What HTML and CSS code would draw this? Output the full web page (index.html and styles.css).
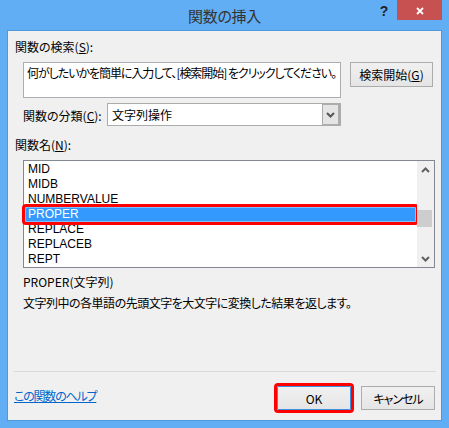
FILE: index.html
```html
<!DOCTYPE html>
<html lang="ja">
<head>
<meta charset="utf-8">
<title>関数の挿入</title>
<link rel="stylesheet" href="styles.css">
</head>
<body>
<div class="window">
  <div class="titlebar">
    <div class="tb-side"></div>
    <div class="title">関数の挿入</div>
    <div class="tb-side tb-right">
      <span class="help-btn">?</span>
      <span class="close-btn"><svg width="8" height="8" viewBox="0 0 8 8"><path d="M1 1L7 7M7 1L1 7" stroke="#fff" stroke-width="1.8" fill="none"/></svg></span>
    </div>
  </div>
  <div class="client">
    <div class="label top-label">関数の検索(<u>S</u>):</div>
    <div class="search-row">
      <div class="search-box">何がしたいかを簡単に入力して、[検索開始] をクリックしてください。</div>
      <div class="btn search-btn">検索開始(<u>G</u>)</div>
    </div>
    <div class="cat-row">
      <div class="label cat-label">関数の分類(<u>C</u>):</div>
      <div class="combo">
        <div class="combo-text">文字列操作</div>
        <div class="combo-btn"><svg width="9" height="6" viewBox="0 0 9 6"><path d="M1 1L4.5 4.5L8 1" stroke="#555" stroke-width="2" fill="none"/></svg></div>
      </div>
    </div>
    <div class="label name-label">関数名(<u>N</u>):</div>
    <div class="listbox">
      <div class="items">
        <div class="item">MID</div>
        <div class="item">MIDB</div>
        <div class="item">NUMBERVALUE</div>
        <div class="item selected">PROPER</div>
        <div class="item">REPLACE</div>
        <div class="item">REPLACEB</div>
        <div class="item">REPT</div>
      </div>
      <div class="scrollbar">
        <div class="sb-arrow"><svg width="9" height="6" viewBox="0 0 9 6"><path d="M1 5L4.5 1.5L8 5" stroke="#606060" stroke-width="2" fill="none"/></svg></div>
        <div class="sb-track"><div class="sb-thumb"></div></div>
        <div class="sb-arrow"><svg width="9" height="6" viewBox="0 0 9 6"><path d="M1 1L4.5 4.5L8 1" stroke="#606060" stroke-width="2" fill="none"/></svg></div>
      </div>
    </div>
    <div class="desc">
      <div class="desc-line">PROPER(文字列)</div>
      <div class="desc-line desc-main">文字列中の各単語の先頭文字を大文字に変換した結果を返します。</div>
    </div>
    <div class="spacer"></div>
    <div class="separator"></div>
    <div class="footer">
      <a class="help-link" href="#">この関数のヘルプ</a>
      <div class="buttons">
        <div class="btn ok-btn">OK</div>
        <div class="btn cancel-btn">キャンセル</div>
      </div>
    </div>
  </div>
</div>
</body>
</html>
```
FILE: styles.css
```css
html, body {
  margin: 0;
  padding: 0;
}
body {
  width: 449px;
  height: 428px;
  overflow: hidden;
  font-family: "Noto Sans CJK JP", sans-serif;
  font-size: 12px;
  font-feature-settings: "palt";
  color: #000;
}
.window {
  box-sizing: border-box;
  width: 449px;
  height: 428px;
  background: #61aef5;
  padding: 0 7px 7px 7px;
  display: flex;
  flex-direction: column;
}
.titlebar {
  height: 30px;
  flex: none;
  display: grid;
  grid-template-columns: 1fr auto 1fr;
}
.title {
  font-size: 15px;
  line-height: 20px;
  padding-top: 6px;
  color: #333;
  letter-spacing: -0.3px;
}
.tb-right {
  display: flex;
  justify-content: flex-end;
  align-items: flex-start;
}
.help-btn {
  width: 26px;
  height: 20px;
  text-align: center;
  font-family: "Liberation Sans", sans-serif;
  font-weight: bold;
  font-size: 14px;
  line-height: 22px;
  color: #222;
}
.close-btn {
  width: 45px;
  height: 20px;
  background: #c75050;
  display: flex;
  align-items: center;
  justify-content: center;
}
.close-btn svg {
  display: block;
  margin-top: 1px;
}
.client {
  flex: 1;
  background: #f0f0f0;
  border: 1px solid #4e98dc;
  display: flex;
  flex-direction: column;
  min-height: 0;
}
.label {
  line-height: 16px;
  white-space: nowrap;
}
.top-label {
  margin: 8px 0 0 7px;
}
.search-row {
  display: flex;
  margin: 7px 0 0 15px;
  align-items: flex-start;
}
.search-box {
  box-sizing: border-box;
  width: 318px;
  height: 36px;
  background: #fff;
  border: 1px solid #abadb3;
  padding: 2px 0 0 3px;
  line-height: 16px;
  white-space: nowrap;
  overflow: hidden;
  letter-spacing: -1.05px;
}
.btn {
  box-sizing: border-box;
  border: 1px solid #acacac;
  background: linear-gradient(#f0f0f0, #e5e5e5);
  display: flex;
  align-items: center;
  justify-content: center;
  white-space: nowrap;
}
.search-btn {
  width: 83px;
  height: 25px;
  margin-left: 9px;
  line-height: 16px;
}
.cat-row {
  display: flex;
  align-items: center;
  margin: 5px 0 0 15px;
}
.cat-label {
  width: 84px;
  padding-top: 3px;
}
.combo {
  box-sizing: border-box;
  width: 234px;
  height: 23px;
  border: 1px solid #acacac;
  background: #fff;
  display: flex;
}
.combo-text {
  flex: 1;
  padding-left: 4px;
  line-height: 21px;
}
.combo-btn {
  box-sizing: border-box;
  width: 18px;
  height: 21px;
  background: #e5e5e5;
  border: 1px solid #acacac;
  border-right-width: 2px;
  display: flex;
  align-items: center;
  justify-content: center;
}
.combo-btn svg, .sb-arrow svg {
  display: block;
}
.name-label {
  margin: 11px 0 0 7px;
}
.listbox {
  box-sizing: border-box;
  width: 412px;
  height: 108px;
  margin: 7px 0 0 15px;
  border: 1px solid #828790;
  background: #fff;
  display: flex;
}
.items {
  flex: 1;
  padding-top: 1px;
}
.item {
  height: 15px;
  line-height: 15px;
  padding-left: 3px;
  margin: 0 1px;
  white-space: nowrap;
  font-family: "Liberation Sans", sans-serif;
  font-size: 12px;
}
.item.selected {
  background: #3399ff;
  color: #fff;
  outline: 3px solid #ff0000;
  border-radius: 1px;
  box-shadow: inset 0 0 0 1px #7fbfff;
}
.scrollbar {
  width: 17px;
  background: #f0f0f0;
  display: flex;
  flex-direction: column;
}
.sb-arrow {
  height: 17px;
  display: flex;
  align-items: center;
  justify-content: center;
}
.sb-track {
  flex: 1;
}
.sb-thumb {
  width: 15px;
  height: 17px;
  margin: 32px 0 0 0;
  background: #cdcdcd;
}
.desc {
  margin: 3px 0 0 15px;
}
.desc-line {
  line-height: 21px;
  white-space: nowrap;
}
.desc-main {
  letter-spacing: -0.5px;
}
.spacer {
  flex: 1;
}
.separator {
  height: 1px;
  background: #dadada;
  margin: 0 5px 0 6px;
}
.footer {
  display: flex;
  align-items: center;
  justify-content: space-between;
  margin: 14px 6px 10px 6px;
}
.help-link {
  color: #0066cc;
  text-decoration: underline;
  line-height: 16px;
  margin-top: -4px;
  letter-spacing: -1.2px;
}
.buttons {
  display: flex;
  gap: 10px;
}
.ok-btn, .cancel-btn {
  width: 74px;
  height: 24px;
}
.cancel-btn {
  letter-spacing: -1px;
}
.ok-btn {
  border-color: #3c8fe0;
  outline: 3px solid #ff0000;
  border-radius: 1px;
}
```
